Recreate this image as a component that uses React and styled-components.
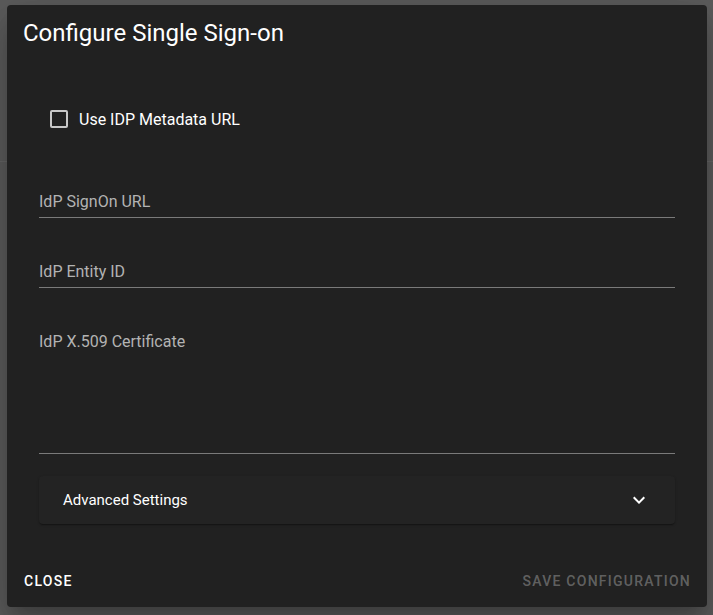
import React from 'react'
import styled, { createGlobalStyle } from 'styled-components'

const GlobalStyle = createGlobalStyle`
  html, body {
    margin: 0;
    padding: 0;
  }
  body {
    background: #5c5c5c;
    background-image: linear-gradient(to bottom, transparent 161px, #666 161px, #666 162px, transparent 162px);
    font-family: Roboto, "Liberation Sans", sans-serif;
    color: #fff;
    height: 615px;
    overflow: hidden;
  }
`

const Screen = styled.div`
  height: 615px;
  padding: 5px 6px 8px 7px;
  box-sizing: border-box;
`

const Dialog = styled.div`
  width: 700px;
  height: 602px;
  background: #212121;
  border-radius: 4px;
  box-shadow: 0 11px 15px -7px rgba(0,0,0,0.2), 0 24px 38px 3px rgba(0,0,0,0.14), 0 9px 46px 8px rgba(0,0,0,0.12);
  display: flex;
  flex-direction: column;
  box-sizing: border-box;
`

const Title = styled.h2`
  margin: 0;
  padding: 12px 16px 0;
  font-size: 24px;
  font-weight: 400;
  line-height: 32px;
  letter-spacing: 0;
  color: #fff;
`

const Content = styled.div`
  flex: 1;
  padding: 0 32px;
  display: flex;
  flex-direction: column;
`

const CheckRow = styled.label`
  display: flex;
  align-items: center;
  gap: 11px;
  margin-top: 58px;
  margin-left: 11px;
  height: 24px;
  font-size: 16px;
  color: #fff;
`

const Box = styled.span`
  width: 14px;
  height: 14px;
  border: 2px solid #c8c8c8;
  border-radius: 2px;
`

const Field = styled.div`
  margin-top: ${p => p.$top}px;
  height: ${p => p.$height}px;
  border-bottom: 1px solid #7a7a7a;
  display: flex;
  align-items: flex-start;
`

const Label = styled.span`
  font-size: 16px;
  line-height: 24px;
  color: #b3b3b3;
`

const Accordion = styled.div`
  margin-top: 22px;
  height: 48px;
  background: #232323;
  border-radius: 4px;
  box-shadow: 0 2px 1px -1px rgba(0,0,0,0.2), 0 1px 1px 0 rgba(0,0,0,0.14), 0 1px 3px 0 rgba(0,0,0,0.12);
  display: flex;
  align-items: center;
  justify-content: space-between;
  padding: 0 24px 0 24px;
  font-size: 15px;
  color: #fff;
`

const Actions = styled.div`
  display: flex;
  justify-content: space-between;
  align-items: center;
  padding: 8px 8px 8px 9px;
`

const Button = styled.button`
  background: none;
  border: none;
  height: 36px;
  padding: 0 8px;
  font-family: Roboto, "Liberation Sans", sans-serif;
  font-size: 14px;
  font-weight: 500;
  letter-spacing: 1.25px;
  text-transform: uppercase;
  color: ${p => (p.disabled ? 'rgba(255,255,255,0.3)' : '#fff')};
`

const Chevron = () => (
  <svg width="24" height="24" viewBox="0 0 24 24" fill="#fff">
    <path d="M16.59 8.59 12 13.17 7.41 8.59 6 10l6 6 6-6z" />
  </svg>
)

const App = () => {
  return (
    <Screen>
      <GlobalStyle />
      <Dialog>
        <Title>Configure Single Sign-on</Title>
        <Content>
          <CheckRow>
            <Box />
            Use IDP Metadata URL
          </CheckRow>
          <Field $top={59} $height={27}>
            <Label>IdP SignOn URL</Label>
          </Field>
          <Field $top={42} $height={27}>
            <Label>IdP Entity ID</Label>
          </Field>
          <Field $top={42} $height={123}>
            <Label>IdP X.509 Certificate</Label>
          </Field>
          <Accordion>
            Advanced Settings
            <Chevron />
          </Accordion>
        </Content>
        <Actions>
          <Button>Close</Button>
          <Button disabled>Save Configuration</Button>
        </Actions>
      </Dialog>
    </Screen>
  )
}

export default App
